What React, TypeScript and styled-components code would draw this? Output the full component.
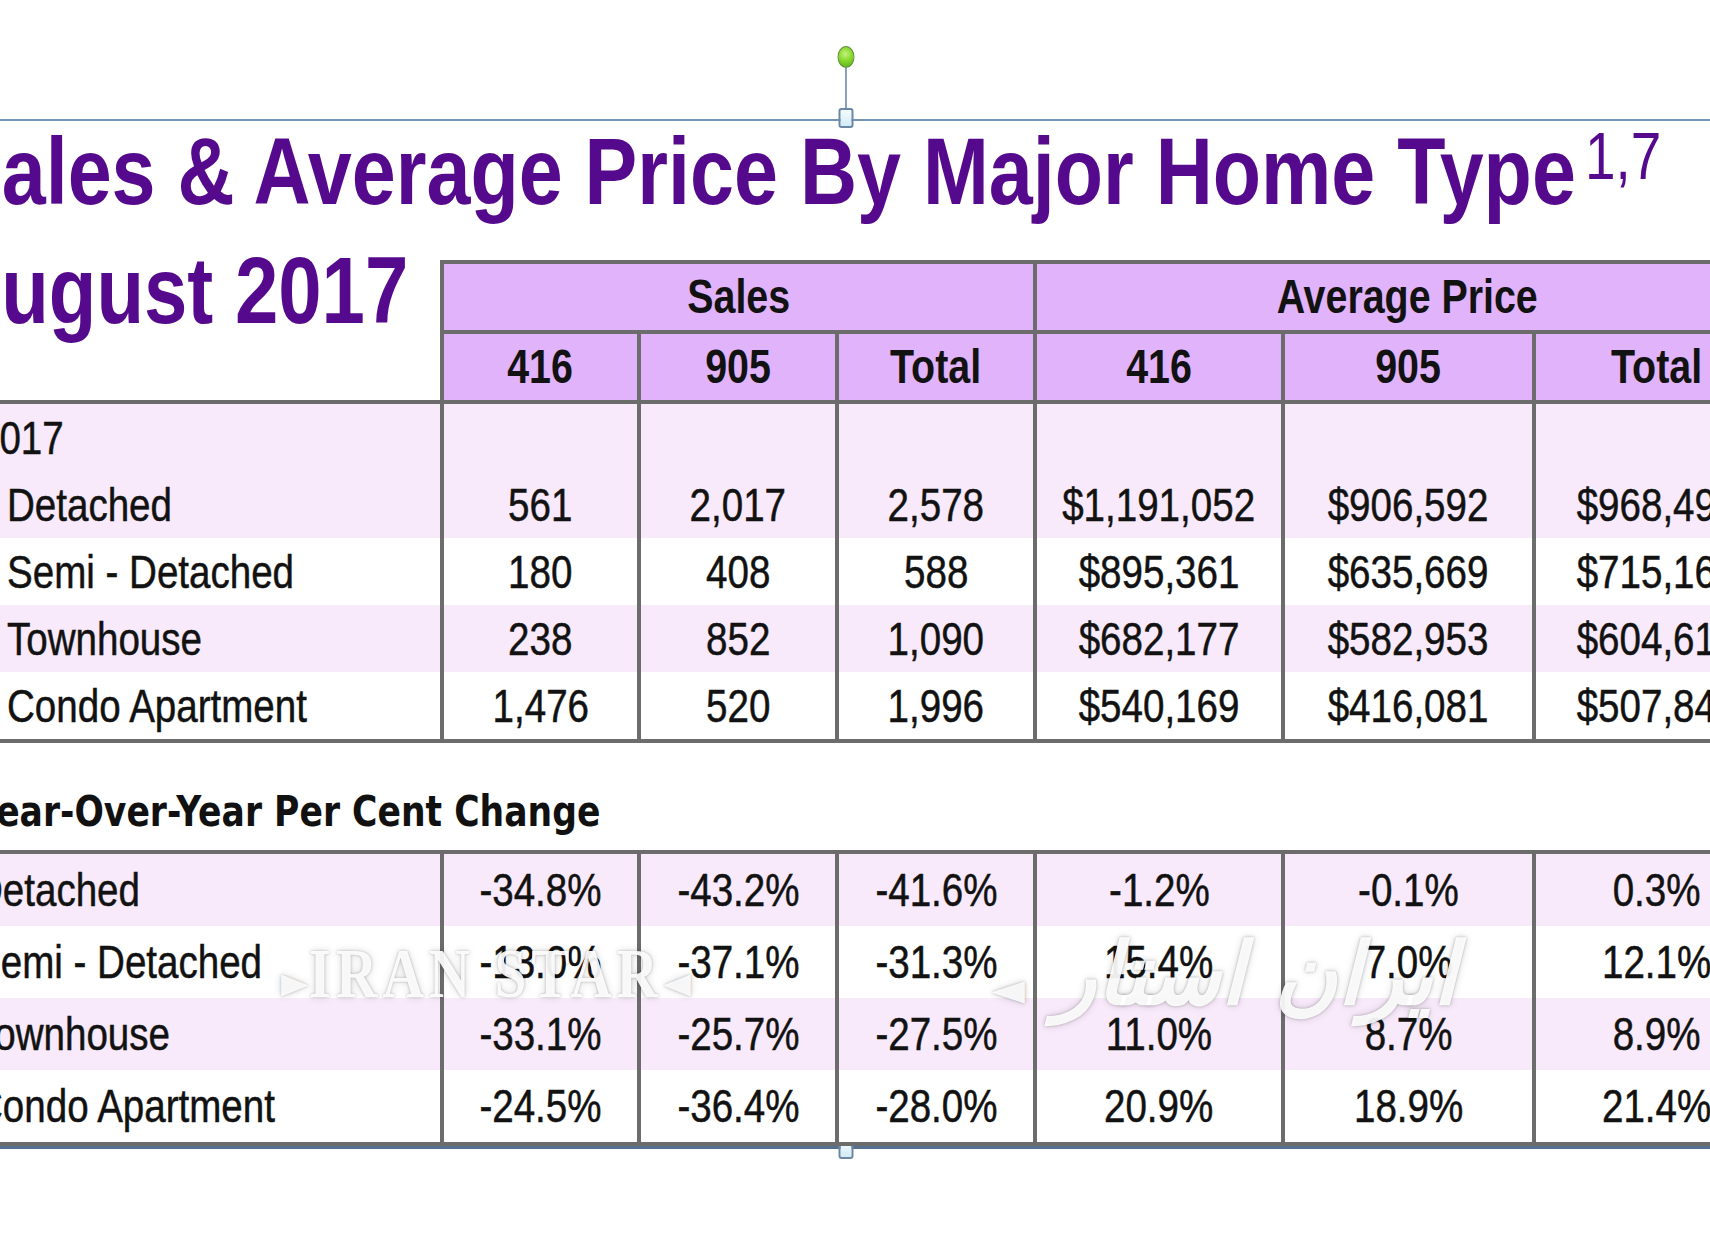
import styled, { createGlobalStyle } from 'styled-components';

const GlobalStyle = createGlobalStyle`
  html, body {
    margin: 0;
    padding: 0;
    background: #fff;
  }
  body {
    overflow: hidden;
    font-family: 'Liberation Sans', Arial, sans-serif;
    color: #121212;
  }
`;

const LINE = '#6c6c6c';
const HEAD_BG = '#e0b3fa';
const BAND_BG = '#f8eafa';
const PURPLE = '#55098c';

const Page = styled.div`
  width: 1710px;
  height: 1248px;
  box-sizing: border-box;
  padding-top: 119px;
  overflow: hidden;
  background: #fff;
`;

const Frame = styled.div`
  position: relative;
  border-top: 2px solid #7393b8;
  border-bottom: 3px solid #56718f;
`;

const RotateDot = styled.div`
  position: absolute;
  left: 846px;
  top: -75px;
  width: 17px;
  height: 22px;
  transform: translateX(-50%);
  border-radius: 50%;
  border: 1px solid #5f8a3c;
  box-sizing: border-box;
  background: radial-gradient(circle at 45% 35%, #c4f27a 0%, #86d82c 45%, #56a81a 100%);
`;

const Stem = styled.div`
  position: absolute;
  left: 846px;
  top: -53px;
  width: 2px;
  height: 42px;
  transform: translateX(-50%);
  background: #8aa1bb;
`;

const Handle = styled.div<{ $bottom?: boolean }>`
  position: absolute;
  left: 846px;
  ${(p) => (p.$bottom ? 'bottom: -13px;' : 'top: -13px;')}
  width: 15px;
  height: 20px;
  transform: translateX(-50%);
  box-sizing: border-box;
  border: 2px solid #6a87a6;
  border-radius: 3px;
  background: linear-gradient(#f4fbff, #d3ebf7);
`;

// the source image is squeezed sideways, so all Arial-like text runs narrow
const Narrow = styled.span<{ $left?: boolean; $shift?: number; $sx?: number }>`
  display: inline-block;
  margin-left: ${(p) => p.$shift ?? 0}px;
  transform: scaleX(${(p) => p.$sx ?? 0.82});
  transform-origin: ${(p) => (p.$left ? '0 50%' : '50% 50%')};
`;

const Title = styled.h1`
  margin: 0 0 39px;
  font-size: 95px;
  line-height: 100px;
  font-weight: 700;
  color: ${PURPLE};
  white-space: nowrap;
`;

const Sup = styled.sup`
  font-size: 66px;
  font-weight: 400;
  line-height: 0;
  vertical-align: 25px;
  margin-left: 11px;
`;

const Grid = styled.div<{ $boxed?: boolean }>`
  position: relative;
  display: grid;
  grid-template-columns: 440px 197px 198px 198px 248px 251px 246px;
  width: 1778px;
  border-bottom: 4px solid ${LINE};
  ${(p) => p.$boxed && `border-top: 4px solid ${LINE};`}
`;

const Corner = styled.div`
  grid-row: span 2;
  border-bottom: 4px solid ${LINE};
  font-size: 95px;
  line-height: 60px;
  font-weight: 700;
  color: ${PURPLE};
  white-space: nowrap;
`;

const GroupHead = styled.div`
  grid-column: span 3;
  height: 74px;
  box-sizing: border-box;
  border: 4px solid ${LINE};
  border-right: none;
  background: ${HEAD_BG};
  font-size: 48px;
  font-weight: 700;
  line-height: 66px;
  text-align: center;
  white-space: nowrap;
`;

const SubHead = styled.div`
  height: 70px;
  box-sizing: border-box;
  border-left: 4px solid ${LINE};
  border-bottom: 4px solid ${LINE};
  background: ${HEAD_BG};
  font-size: 48px;
  font-weight: 700;
  line-height: 66px;
  text-align: center;
  white-space: nowrap;
`;

const Label = styled.div<{ $shaded: boolean; $h: number }>`
  height: ${(p) => p.$h}px;
  line-height: ${(p) => p.$h}px;
  padding-left: 7px;
  background: ${(p) => (p.$shaded ? BAND_BG : '#fff')};
  font-size: 47px;
  -webkit-text-stroke: 0.5px currentColor;
  white-space: nowrap;
`;

const Value = styled.div<{ $shaded: boolean; $h: number }>`
  height: ${(p) => p.$h}px;
  line-height: ${(p) => p.$h}px;
  border-left: 4px solid ${LINE};
  background: ${(p) => (p.$shaded ? BAND_BG : '#fff')};
  font-size: 47px;
  -webkit-text-stroke: 0.5px currentColor;
  text-align: center;
  white-space: nowrap;
`;

const SectionHeading = styled.h2`
  margin: 43px 0 14px;
  font-family: 'DejaVu Sans', 'Liberation Sans', sans-serif;
  font-size: 43px;
  line-height: 50px;
  font-weight: 700;
  color: #111;
  text-indent: -32px;
  white-space: nowrap;
  transform: scaleX(0.805);
  transform-origin: 0 0;
`;

const Watermark = styled.div`
  position: absolute;
  left: 0;
  top: 80px;
  height: 80px;
  display: flex;
  align-items: center;
  padding-left: 281px;
  pointer-events: none;
  color: rgba(255, 255, 255, 0.92);
  text-shadow: 0 0 3px rgba(0, 0, 0, 0.28), 0 0 9px rgba(0, 0, 0, 0.14);
  white-space: nowrap;
`;

const MarkLatin = styled.span`
  display: inline-block;
  width: 440px;
  font-family: 'Liberation Serif', serif;
  font-weight: 700;
  font-size: 70px;
  letter-spacing: 6px;
  transform: scaleX(0.82);
  transform-origin: 0 50%;
`;

const MarkPersian = styled.span`
  margin-left: 270px;
  font-family: 'DejaVu Sans', sans-serif;
  font-weight: 700;
  font-size: 86px;
  font-style: italic;
`;

const Arrow = styled.span`
  font-family: 'DejaVu Sans', sans-serif;
  font-size: 44px;
  letter-spacing: 0;
`;

type Row = { label: string; shift?: number; shaded: boolean; values: string[] };

const current: Row[] = [
  { label: '2017', shift: -29, shaded: true, values: ['', '', '', '', '', ''] },
  { label: 'Detached', shaded: true, values: ['561', '2,017', '2,578', '$1,191,052', '$906,592', '$968,495'] },
  { label: 'Semi - Detached', shaded: false, values: ['180', '408', '588', '$895,361', '$635,669', '$715,165'] },
  { label: 'Townhouse', shaded: true, values: ['238', '852', '1,090', '$682,177', '$582,953', '$604,615'] },
  { label: 'Condo Apartment', shaded: false, values: ['1,476', '520', '1,996', '$540,169', '$416,081', '$507,844'] },
];

const change: Row[] = [
  { label: 'Detached', shaded: true, values: ['-34.8%', '-43.2%', '-41.6%', '-1.2%', '-0.1%', '0.3%'] },
  { label: 'Semi - Detached', shaded: false, values: ['-13.0%', '-37.1%', '-31.3%', '15.4%', '7.0%', '12.1%'] },
  { label: 'Townhouse', shaded: true, values: ['-33.1%', '-25.7%', '-27.5%', '11.0%', '8.7%', '8.9%'] },
  { label: 'Condo Apartment', shaded: false, values: ['-24.5%', '-36.4%', '-28.0%', '20.9%', '18.9%', '21.4%'] },
];

function BodyRows({ rows, height, shift }: { rows: Row[]; height: number; shift: number }) {
  return (
    <>
      {rows.map((r) => (
        <div key={r.label} style={{ display: 'contents' }}>
          <Label $shaded={r.shaded} $h={height}>
            <Narrow $left $shift={r.shift ?? shift}>
              {r.label}
            </Narrow>
          </Label>
          {r.values.map((v, i) => (
            <Value key={i} $shaded={r.shaded} $h={height}>
              <Narrow>{v}</Narrow>
            </Value>
          ))}
        </div>
      ))}
    </>
  );
}

const subHeads = ['416', '905', 'Total', '416', '905', 'Total'];

export default function App() {
  return (
    <>
      <GlobalStyle />
      <Page>
        <Frame>
          <RotateDot />
          <Stem />
          <Handle />
          <Handle $bottom />

          <Title>
            <Narrow $left $shift={-51} $sx={0.832}>
              Sales &amp; Average Price By Major Home Type<Sup>1,7</Sup>
            </Narrow>
          </Title>

          <Grid>
            <Corner>
              <Narrow $left $shift={-55}>
                August 2017
              </Narrow>
            </Corner>
            <GroupHead>
              <Narrow>Sales</Narrow>
            </GroupHead>
            <GroupHead>
              <Narrow>Average Price</Narrow>
            </GroupHead>
            {subHeads.map((h, i) => (
              <SubHead key={i}>
                <Narrow>{h}</Narrow>
              </SubHead>
            ))}
            <BodyRows rows={current} height={67} shift={0} />
          </Grid>

          <SectionHeading>Year-Over-Year Per Cent Change</SectionHeading>

          <Grid $boxed>
            <BodyRows rows={change} height={72} shift={-32} />
            <Watermark>
              <MarkLatin>
                <Arrow>►</Arrow>IRAN STAR<Arrow>◄</Arrow>
              </MarkLatin>
              <MarkPersian>
                <Arrow>◄</Arrow> ایران استار
              </MarkPersian>
            </Watermark>
          </Grid>
        </Frame>
      </Page>
    </>
  );
}
